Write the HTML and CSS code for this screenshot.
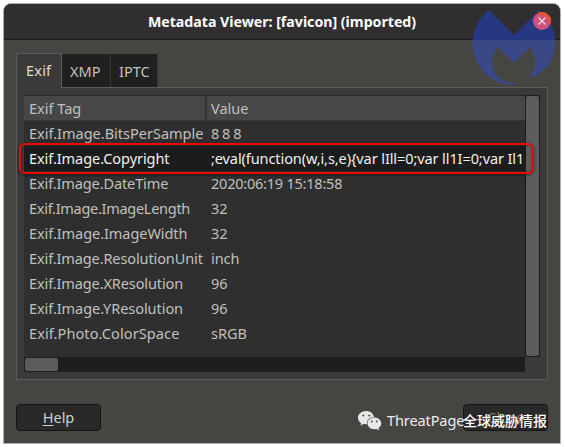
FILE: index.html
```html
<!DOCTYPE html>
<html lang="en">
<head>
<meta charset="utf-8">
<title>Metadata Viewer</title>
<link rel="stylesheet" href="styles.css">
</head>
<body>
<div class="window">
  <header class="titlebar"><h1><span>Metadata Viewer: [favicon] (imported)</span></h1></header>
  <main class="content">
    <nav class="tabs">
      <div class="tab active">Exif</div>
      <div class="tab xmp">XMP</div>
      <div class="tab iptc">IPTC</div>
    </nav>
    <section class="panel">
      <div class="view">
        <div class="row head"><div class="tag">Exif Tag</div><div class="value">Value</div></div>
        <div class="row"><div class="tag">Exif.Image.BitsPerSample</div><div class="value eights">8 8 8</div></div>
        <div class="row selected"><div class="tag tight">Exif.Image.Copyright</div><div class="value code">;eval(function(w,i,s,e){var lIll=0;var ll1I=0;var Il1</div></div>
        <div class="row"><div class="tag tighter">Exif.Image.DateTime</div><div class="value date">2020:06:19 15:18:58</div></div>
        <div class="row"><div class="tag tightest">Exif.Image.ImageLength</div><div class="value">32</div></div>
        <div class="row"><div class="tag tight">Exif.Image.ImageWidth</div><div class="value">32</div></div>
        <div class="row"><div class="tag tighter">Exif.Image.ResolutionUnit</div><div class="value tight">inch</div></div>
        <div class="row"><div class="tag tighter">Exif.Image.XResolution</div><div class="value">96</div></div>
        <div class="row"><div class="tag tight">Exif.Image.YResolution</div><div class="value">96</div></div>
        <div class="row"><div class="tag wide">Exif.Photo.ColorSpace</div><div class="value">sRGB</div></div>
      </div>
      <div class="vscroll"><div class="thumb"></div></div>
      <div class="hscroll"><div class="thumb"></div></div>
    </section>
    <footer class="actions">
      <div class="button"><u>H</u>elp</div>
      <div class="button close-label"><u>C</u>lose</div>
    </footer>
  </main>
  <svg class="logo" viewBox="0 0 84 76">
    <defs><linearGradient id="tint" x1="0" y1="0" x2="0" y2="76" gradientUnits="userSpaceOnUse"><stop offset=".39" stop-color="#263989"/><stop offset=".39" stop-color="#3a488d"/></linearGradient></defs>
    <path fill="url(#tint)" fill-opacity=".92" d="M17 0L42 25L67 0A41.500 41.500 0 0 1 83 33C83 50 73 64 57 68C61 63 63 57 63 51C63 45 61 41 58 37L42 53L26 37C22 41 20 46 20 52C20 64 29 72.500 42 73V75A41.500 41.500 0 0 1 .500 33A41.500 41.500 0 0 1 17 0Z"/>
  </svg>
  <svg class="close" viewBox="0 0 18 18"><circle cx="9" cy="9" r="9" fill="#cf507a"/><path d="M5 1A9 9 0 0 1 17.500 12C16 7 13 3 9.500 1.200L5 5Z" fill="#ea5423"/><path d="M5.500 5.500l7 7m0-7l-7 7" stroke="#f0dce4" stroke-width="1.300"/></svg>
</div>
<div class="highlight"></div>
<div class="watermark">
  <svg viewBox="0 0 24 21"><path fill="#e8e8e8" d="M8 1C3.500 1 0 4 0 7.700C0 10 1.200 11.800 3 13L2.600 15.500L5.400 14L9 14.300C8.300 10 12 7 16 7C15 3 12 1 8 1Z"/><path fill="#e8e8e8" d="M16.200 7.500C12.500 7.500 9.500 10 9.500 13.300C9.500 16.700 12.500 19.200 16.200 19.200L18.500 18.900L21 20.200L20.600 18C22.200 17 23.200 15.200 23.200 13.300C23.200 10 20 7.500 16.200 7.500Z"/><g fill="#454542"><circle cx="5.300" cy="5.500" r="1"/><circle cx="11.300" cy="5.500" r="1"/><circle cx="13.800" cy="11.500" r=".9"/><circle cx="18.700" cy="11.500" r=".9"/></g></svg>
  <span class="latin">ThreatPage</span><span class="cjk" lang="zh">全球威胁情报</span>
</div>
</body>
</html>
```
FILE: styles.css
```css
* { box-sizing: border-box; }
body {
  margin: 0;
  width: 565px;
  height: 447px;
  padding: 3px;
  overflow: hidden;
  position: relative;
  background: #fff;
  font: 14.5px/25px "Noto Sans", sans-serif;
  color: #c0c0bd;
}
.window {
  position: relative;
  width: 558px;
  height: 441px;
  border: 1px solid #b0b0b0;
  border-radius: 8px 8px 0 0;
  background: #454542;
  overflow: hidden;
}
.titlebar {
  height: 36px;
  background: #312e30;
  border-bottom: 1px solid #1d1c1c;
}
h1 {
  margin: 0;
  text-align: center;
  color: #fff;
  font-size: 14.2px;
  line-height: 35px;
  letter-spacing: -.02px;
}
.content { padding: 13px 12px 0; }
.tabs { display: flex; align-items: flex-end; height: 35px; margin-bottom: -1px; position: relative; }
.tab {
  width: 47px;
  height: 33px;
  margin-bottom: 1px;
  padding-left: 8px;
  line-height: 34px;
  background: #202020;
  border-right: 1px solid #353535;
}
.tab.active {
  width: 46px;
  height: 35px;
  margin-bottom: 0;
  padding-left: 9px;
  line-height: 33px;
  letter-spacing: .2px;
  color: #dcdcd9;
  background: #3a3a3a;
  border: 1px solid #5c5c5c;
  border-bottom: 0;
}
.tab.xmp { width: 49px; }
.panel {
  display: grid;
  grid-template: 262px 15px / 501px 15px;
  width: 532px;
  height: 293px;
  padding: 7px;
  border: 1px solid #5c5c5c;
  background: #3a3a3a;
}
.view { background: #2f2f2f; border-top: 1px solid #282828; overflow: hidden; }
.row { display: grid; grid-template-columns: 183px 318px; height: 25px; }
.row > div { padding-left: 5px; white-space: nowrap; }
.row .value { padding-left: 4px; }
.head { background: #474747; border-bottom: 1px solid #393939; }
.head .tag { border-right: 2px solid #343434; }
.selected { background: #1c1c1c; color: #f0f0ed; }
.tight { letter-spacing: -.06px; }
.tighter { letter-spacing: -.11px; }
.tightest { letter-spacing: -.28px; }
.wide { letter-spacing: .1px; }
.eights { letter-spacing: -.5px; }
.date { letter-spacing: -.22px; }
.code { letter-spacing: -.09px; }
.vscroll { background: #1c1c1c; padding: 1px; }
.vscroll .thumb { height: 260px; background: #5c5c5c; border-radius: 2px; }
.hscroll { background: #1e1e1e; padding: 1px; }
.hscroll .thumb { width: 33px; height: 13px; background: #5c5c5c; border-radius: 2px; }
.actions { display: flex; justify-content: space-between; width: 532px; margin-top: 24px; }
.button {
  width: 85px;
  height: 27px;
  border: 1px solid #151515;
  border-radius: 4px;
  background: #292929;
  text-align: center;
  color: #d0d0cd;
}
.close-label { color: #777; }
u { text-underline-offset: 2px; }
.close { position: absolute; left: 529px; top: 8px; width: 18px; height: 18px; }
.logo { position: absolute; left: 468px; top: 6px; width: 84px; height: 76px; }
.highlight {
  position: absolute;
  left: 19px;
  top: 143px;
  width: 515px;
  height: 31px;
  border: 2px solid #ec0808;
  border-radius: 6px;
  box-shadow: 0 1px 3px #0008, inset 0 0 2px #0008;
}
.watermark {
  position: absolute;
  left: 358px;
  top: 408px;
  display: flex;
  color: #ededed;
  line-height: 24px;
  white-space: nowrap;
}
.watermark svg { width: 24px; height: 21px; margin: 2px 5px 0 0; }
.latin { width: 76px; font-size: 14.5px; letter-spacing: -.1px; }
.cjk { font: 500 14px/24px "Noto Sans CJK SC", sans-serif; color: #fff; }
```
